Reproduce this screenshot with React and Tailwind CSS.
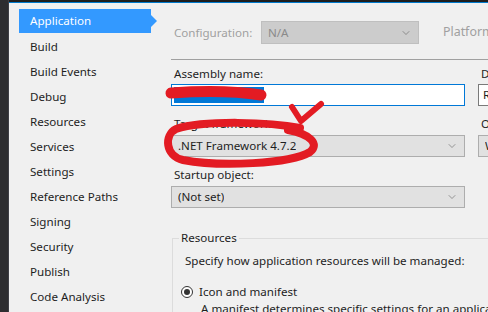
import { ChevronDown } from "lucide-react"

const navItems = [
  "Application",
  "Build",
  "Build Events",
  "Debug",
  "Resources",
  "Services",
  "Settings",
  "Reference Paths",
  "Signing",
  "Security",
  "Publish",
  "Code Analysis",
]

function Combo({ value, disabled, className = "" }) {
  return (
    <div
      className={`flex items-center justify-between border pl-[6px] pr-[6px] ${
        disabled
          ? "bg-[#cccccc] border-[#bfbfbf] text-[#8a8a8a]"
          : "bg-[#e1e1e1] border-[#adadad] text-[#1e1e1e]"
      } ${className}`}
    >
      <span className="truncate">{value}</span>
      <ChevronDown size={12} strokeWidth={1.2} className="text-[#606060] shrink-0" />
    </div>
  )
}

export default function App() {
  return (
    <div
      className="relative w-[488px] h-[312px] overflow-hidden flex bg-[#f0f0f0] text-[11.6px] text-[#1e1e1e]"
      style={{ fontFamily: '"Noto Sans", "Open Sans", sans-serif' }}
    >
      {/* left dark strip */}
      <div className="w-[9px] shrink-0 bg-[#2d2d30] border-r border-[#3f3f46]" />

      <div className="flex-1 flex flex-col min-w-0">
        {/* top bar */}
        <div className="h-[2px] bg-[#1e1e1e]" />
        <div className="h-[1px] bg-[#007acc]" />

        <div className="flex flex-1 min-h-0">
          {/* sidebar */}
          <div className="w-[151px] shrink-0 pt-[6px] pl-[10px]">
            {navItems.map((item, i) =>
              i === 0 ? (
                <div key={item} className="relative h-[24px] mb-[1px] w-[132px] bg-[#3399ff] text-white flex items-center pl-[11px]">
                  {item}
                  <div className="absolute right-[-6px] top-[6px] w-0 h-0 border-y-[6px] border-y-transparent border-l-[6px] border-l-[#3399ff]" />
                </div>
              ) : (
                <div key={item} className="h-[25px] flex items-center pl-[11px]">
                  {item}
                </div>
              )
            )}
          </div>

          {/* main */}
          <div className="flex-1 min-w-0 pl-[11px] pt-[18px]">
            <div className="flex items-center h-[23px] text-[#a0a0a0] whitespace-nowrap">
              <span className="w-[90px] shrink-0 pl-[3px]">Configuration:</span>
              <Combo value="N/A" disabled className="w-[158px] shrink-0 h-[23px]" />
              <span className="ml-[24px] text-[12.4px]">Platform:</span>
            </div>

            <div className="mt-[15px] h-[1px] bg-[#a0a0a0]" />

            <div className="flex gap-[13px] mt-[6px] whitespace-nowrap">
              <div className="w-[294px] shrink-0">
                <div className="h-[16px] leading-[16px] pl-[3px]">Assembly name:</div>
                <div className="mt-[2px] h-[22px] bg-white border border-[#0078d7] flex items-center pl-[2px]">
                  <span className="bg-[#0078d7] text-[#0078d7] w-[90px] h-[16px] leading-[16px]">WindowsApp</span>
                </div>

                <div className="mt-[10px] h-[16px] leading-[16px] pl-[3px]">Target framework:</div>
                <Combo value=".NET Framework 4.7.2" className="mt-[3px] h-[22px]" />

                <div className="mt-[10px] h-[16px] leading-[16px] pl-[3px]">Startup object:</div>
                <Combo value="(Not set)" className="mt-[3px] h-[22px]" />
              </div>

              <div className="w-[200px] shrink-0">
                <div className="h-[16px] leading-[16px] pl-[3px]">Default namespace:</div>
                <div className="mt-[2px] h-[22px] bg-white border border-[#7a7a7a] flex items-center pl-[4px]">
                  Resources
                </div>
                <div className="mt-[10px] h-[16px] leading-[16px] pl-[3px]">Output type:</div>
                <Combo value="Windows Application" className="mt-[3px] h-[22px]" />
              </div>
            </div>

            {/* Resources group */}
            <div className="relative mt-[30px] ml-[1px] border border-[#dcdcdc] border-r-0 border-b-0 pt-[14px] pl-[12px] whitespace-nowrap">
              <span className="absolute left-[6px] top-[-9px] px-[2px] bg-[#f0f0f0] leading-[16px]">Resources</span>
              <div className="h-[16px] leading-[16px]">Specify how application resources will be managed:</div>
              <div className="mt-[15px] h-[16px] flex items-center gap-[6px] -ml-[4px]">
                <span className="w-[12px] h-[12px] rounded-full border border-[#333] bg-white flex items-center justify-center">
                  <span className="w-[6px] h-[6px] rounded-full bg-[#333]" />
                </span>
                <span className="leading-[16px]">Icon and manifest</span>
              </div>
              <div className="mt-[1px] h-[16px] leading-[16px] pl-[16px]">A manifest determines specific settings for an application.</div>
            </div>
          </div>
        </div>
      </div>

      {/* red annotation scribbles */}
      <svg className="absolute inset-0 pointer-events-none" width="488" height="312" viewBox="0 0 488 312">
        <g fill="none" stroke="#e31b23" strokeLinecap="round" strokeLinejoin="round">
          <path d="M171 93 C 200 91, 235 91, 261 95" strokeWidth="11" />
          <path d="M292 107 L 301 121 L 321 104" strokeWidth="6" />
          <path
            d="M300 128 C 270 122, 205 120, 176 129 C 164 135, 165 156, 183 160 C 220 167, 290 164, 310 152 C 320 144, 310 134, 288 130"
            strokeWidth="8"
          />
        </g>
      </svg>
    </div>
  )
}
